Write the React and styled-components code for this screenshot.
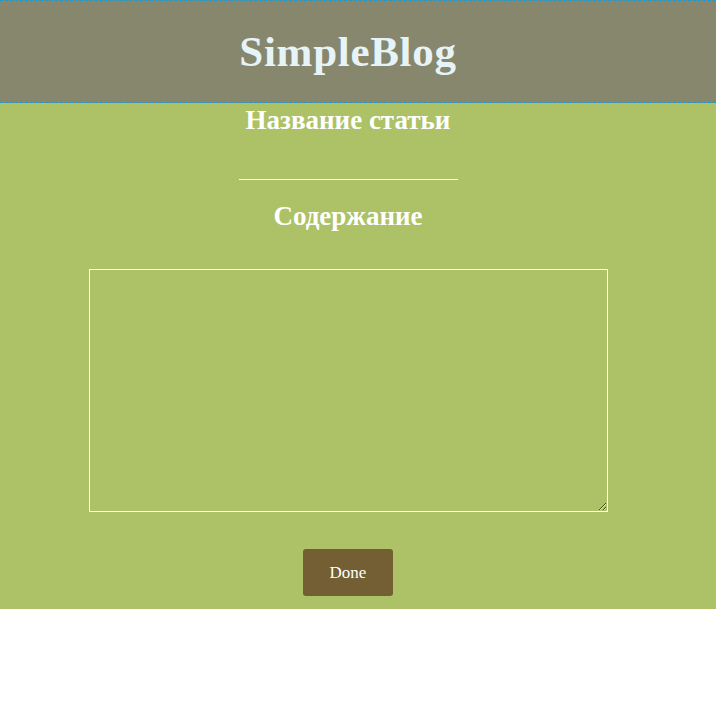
import React, { useState } from 'react';
import styled, { createGlobalStyle } from 'styled-components';

const GlobalStyle = createGlobalStyle`
  body {
    margin: 0;
    font-family: 'Liberation Serif', 'DejaVu Serif', serif;
    background: #ffffff;
  }
`;

const App = () => {
  const [title, setTitle] = useState('');
  const [content, setContent] = useState('');

  return (
    <Page>
      <GlobalStyle />
      <Header>
        <Logo>SimpleBlog</Logo>
      </Header>
      <Editor>
        <Label>Название статьи</Label>
        <TitleInput value={title} onChange={e => setTitle(e.target.value)} />
        <Label $spaced>Содержание</Label>
        <ContentArea value={content} onChange={e => setContent(e.target.value)} />
        <DoneButton>Done</DoneButton>
      </Editor>
    </Page>
  );
};

export default App;

// Styled Components

const Page = styled.div`
  display: flex;
  flex-direction: column;
`;

const Header = styled.header`
  height: 103px;
  box-sizing: border-box;
  padding-right: 20px;
  background: #87876e;
  border-top: 1px dashed #1a9ad6;
  border-bottom: 1px dashed #1a9ad6;
  display: flex;
  align-items: center;
  justify-content: center;
`;

const Logo = styled.h1`
  margin: 0;
  font-size: 43px;
  font-weight: 700;
  color: #e6f4f8;
  letter-spacing: 0.7px;
`;

const Editor = styled.main`
  background: #adc167;
  display: flex;
  flex-direction: column;
  align-items: center;
  padding: 1px 20px 13px 0;
`;

const Label = styled.h2`
  margin: ${p => (p.$spaced ? '20px' : '0')} 0 0;
  font-size: 27px;
  line-height: 32px;
  font-weight: 700;
  color: #ffffff;
`;

const TitleInput = styled.input`
  margin-top: 13px;
  width: 219px;
  height: 31px;
  box-sizing: border-box;
  background: transparent;
  border: none;
  border-bottom: 1px solid #ffffff;
  outline: none;
  color: #ffffff;
  font-family: inherit;
  font-size: 16px;
`;

const ContentArea = styled.textarea`
  margin-top: 37px;
  width: 519px;
  height: 243px;
  box-sizing: border-box;
  background: transparent;
  border: 1px solid #ffffff;
  outline: none;
  color: #ffffff;
  font-family: inherit;
  font-size: 16px;
`;

const DoneButton = styled.button`
  margin-top: 37px;
  width: 90px;
  height: 47px;
  background: #735f33;
  border: none;
  border-radius: 3px;
  color: #ffffff;
  font-family: inherit;
  font-size: 17px;
  cursor: pointer;
`;
